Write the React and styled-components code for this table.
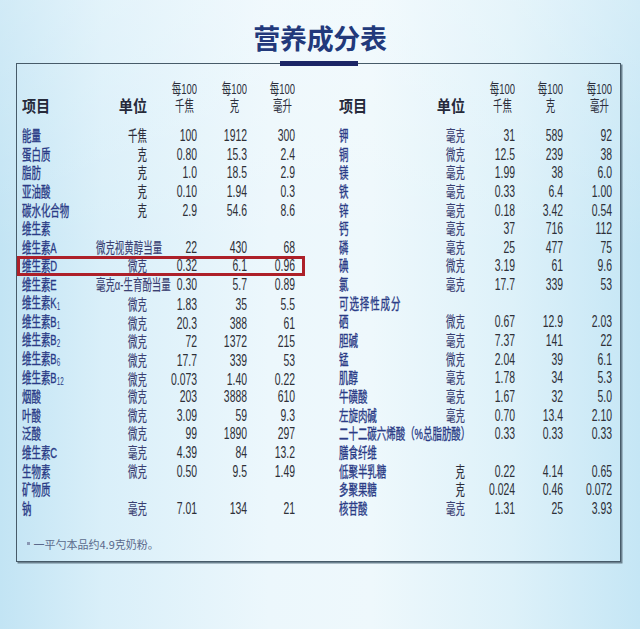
import React from "react";
import styled, { createGlobalStyle } from "styled-components";

const Global = createGlobalStyle`
  html, body { margin: 0; padding: 0; }
  body {
    width: 640px;
    height: 629px;
    overflow: hidden;
    font-family: "Liberation Sans", "Noto Sans CJK SC", sans-serif;
  }
`;

const Page = styled.div`
  width: 640px;
  height: 629px;
  box-sizing: border-box;
  padding-top: 22px;
  display: flex;
  flex-direction: column;
  background:
    linear-gradient(180deg, rgba(255,255,255,0.25) 0%, rgba(255,255,255,0) 40%),
    linear-gradient(90deg, #c2e4f4 0%, #d9eff9 16%, #ecf7fc 42%, #eef8fc 58%, #ddf1f9 80%, #c5e6f5 100%);
`;

const Title = styled.h1`
  margin: 0 0 9px;
  text-align: center;
  font-family: "Noto Sans CJK SC", sans-serif;
  font-size: 27px;
  line-height: 32px;
  font-weight: 700;
  color: #22397b;
  letter-spacing: -0.3px;
`;

const Panel = styled.div`
  position: relative;
  margin-left: 16px;
  width: 605px;
  height: 499px;
  box-sizing: border-box;
  border: 1.5px solid #475b69;
  box-shadow: 1.5px 1.5px 0 #6c8290;
  padding: 15.5px 6.5px 0 4.5px;
  display: flex;
  flex-direction: column;
`;

const Accent = styled.div`
  position: absolute;
  top: -3px;
  left: 50%;
  transform: translateX(-50%);
  width: 78px;
  height: 5px;
  background: #1b2566;
`;

const Tables = styled.div`
  display: flex;
  gap: 44px;
`;

const Table = styled.div`
  width: 273px;
  display: flex;
  flex-direction: column;
`;

const HeadRow = styled.div`
  display: grid;
  grid-template-columns: ${(p) => p.$cols};
  align-items: end;
  margin-bottom: 12.7px;
`;

const HeadLabel = styled.div`
  min-width: 0;
  white-space: nowrap;
  text-align: ${(p) => (p.$right ? "right" : "left")};
  transform: scaleX(0.88);
  transform-origin: ${(p) => (p.$right ? "right" : "left")} center;
  font-family: "Noto Sans CJK SC", sans-serif;
  font-size: 16px;
  line-height: 17px;
  font-weight: 700;
  color: #262a3a;
`;

const HeadCol = styled.div`
  min-width: 0;
  display: flex;
  justify-content: flex-end;
  transform: scaleX(0.63);
  transform-origin: right center;
`;

const HeadStack = styled.div`
  display: flex;
  flex-direction: column;
  align-items: center;
  white-space: nowrap;
  font-size: 15px;
  line-height: 17px;
  color: #2c2f3c;
`;

const Row = styled.div`
  position: relative;
  display: grid;
  grid-template-columns: ${(p) => p.$cols};
  align-items: center;
  height: 18.65px;
  &::after {
    content: "";
    display: ${(p) => (p.$hl ? "block" : "none")};
    position: absolute;
    left: -5px;
    right: -10px;
    top: -1px;
    bottom: -1px;
    border: 3px solid #ad2029;
    pointer-events: none;
  }
`;

const Name = styled.div`
  min-width: 0;
  white-space: nowrap;
  transform: scaleX(0.63);
  transform-origin: left center;
  font-size: 15px;
  line-height: 17px;
  font-weight: 400;
  -webkit-text-stroke: 0.35px currentColor;
  color: #2a3b86;
  letter-spacing: ${(p) => (p.$wide ? "1.5px" : "0")};
`;

const Sub = styled.span`
  font-size: 10px;
  vertical-align: -2px;
  -webkit-text-stroke: 0;
`;

const Unit = styled.div`
  min-width: 0;
  white-space: nowrap;
  text-align: right;
  transform: scaleX(0.63);
  transform-origin: right center;
  font-size: 15px;
  line-height: 17px;
  -webkit-text-stroke: 0.15px currentColor;
  color: ${(p) => (p.$dark ? "#2b2d3a" : "#3a3f72")};
`;

const Num = styled.div`
  min-width: 0;
  white-space: nowrap;
  text-align: right;
  transform: scaleX(0.65);
  transform-origin: right center;
  font-size: 16px;
  line-height: 17px;
  color: #2e3038;
`;

const Note = styled.div`
  margin: 19px 0 0 5px;
  display: flex;
  align-items: center;
  gap: 4px;
  font-family: "Noto Sans CJK SC", sans-serif;
  font-size: 11px;
  line-height: 14px;
  color: #5b6a8c;
`;

const NoteDot = styled.span`
  width: 3px;
  height: 3px;
  background: #8a98b4;
`;

const leftCols = "44px 81px 50px 50px 48px";
const rightCols = "44px 82px 50px 48px 49px";

const leftRows = [
  { n: "能量", u: "千焦", v: ["100", "1912", "300"] },
  { n: "蛋白质", u: "克", v: ["0.80", "15.3", "2.4"] },
  { n: "脂肪", u: "克", v: ["1.0", "18.5", "2.9"] },
  { n: "亚油酸", u: "克", v: ["0.10", "1.94", "0.3"] },
  { n: "碳水化合物", u: "克", v: ["2.9", "54.6", "8.6"] },
  { n: "维生素" },
  { n: "维生素A", u: "微克视黄醇当量", v: ["22", "430", "68"] },
  { n: "维生素D", u: "微克", v: ["0.32", "6.1", "0.96"], hl: true },
  { n: "维生素E", u: "毫克α-生育酚当量", v: ["0.30", "5.7", "0.89"] },
  { n: "维生素K", s: "1", u: "微克", v: ["1.83", "35", "5.5"] },
  { n: "维生素B", s: "1", u: "微克", v: ["20.3", "388", "61"] },
  { n: "维生素B", s: "2", u: "微克", v: ["72", "1372", "215"] },
  { n: "维生素B", s: "6", u: "微克", v: ["17.7", "339", "53"] },
  { n: "维生素B", s: "12", u: "微克", v: ["0.073", "1.40", "0.22"] },
  { n: "烟酸", u: "微克", v: ["203", "3888", "610"] },
  { n: "叶酸", u: "微克", v: ["3.09", "59", "9.3"] },
  { n: "泛酸", u: "微克", v: ["99", "1890", "297"] },
  { n: "维生素C", u: "毫克", v: ["4.39", "84", "13.2"] },
  { n: "生物素", u: "微克", v: ["0.50", "9.5", "1.49"] },
  { n: "矿物质" },
  { n: "钠", u: "毫克", v: ["7.01", "134", "21"] },
];

const rightRows = [
  { n: "钾", u: "毫克", v: ["31", "589", "92"] },
  { n: "铜", u: "微克", v: ["12.5", "239", "38"] },
  { n: "镁", u: "毫克", v: ["1.99", "38", "6.0"] },
  { n: "铁", u: "毫克", v: ["0.33", "6.4", "1.00"] },
  { n: "锌", u: "毫克", v: ["0.18", "3.42", "0.54"] },
  { n: "钙", u: "毫克", v: ["37", "716", "112"] },
  { n: "磷", u: "毫克", v: ["25", "477", "75"] },
  { n: "碘", u: "微克", v: ["3.19", "61", "9.6"] },
  { n: "氯", u: "毫克", v: ["17.7", "339", "53"] },
  { n: "可选择性成分", wide: true },
  { n: "硒", u: "微克", v: ["0.67", "12.9", "2.03"] },
  { n: "胆碱", u: "毫克", v: ["7.37", "141", "22"] },
  { n: "锰", u: "微克", v: ["2.04", "39", "6.1"] },
  { n: "肌醇", u: "毫克", v: ["1.78", "34", "5.3"] },
  { n: "牛磺酸", u: "毫克", v: ["1.67", "32", "5.0"] },
  { n: "左旋肉碱", u: "毫克", v: ["0.70", "13.4", "2.10"] },
  { n: "二十二碳六烯酸（%总脂肪酸）", u: "", v: ["0.33", "0.33", "0.33"] },
  { n: "膳食纤维" },
  { n: "低聚半乳糖", u: "克", v: ["0.22", "4.14", "0.65"] },
  { n: "多聚果糖", u: "克", v: ["0.024", "0.46", "0.072"] },
  { n: "核苷酸", u: "毫克", v: ["1.31", "25", "3.93"] },
];

function NutritionTable({ cols, rows }) {
  return (
    <Table>
      <HeadRow $cols={cols}>
        <HeadLabel>项目</HeadLabel>
        <HeadLabel $right>单位</HeadLabel>
        {["千焦", "克", "毫升"].map((b) => (
          <HeadCol key={b}>
            <HeadStack>
              <span>每100</span>
              <span>{b}</span>
            </HeadStack>
          </HeadCol>
        ))}
      </HeadRow>
      {rows.map((r, i) => (
        <Row key={i} $cols={cols} $hl={r.hl}>
          <Name $wide={r.wide}>
            {r.n}
            {r.s && <Sub>{r.s}</Sub>}
          </Name>
          <Unit $dark={r.u === "克" || r.u === "千焦"}>{r.u || ""}</Unit>
          {(r.v || ["", "", ""]).map((x, j) => (
            <Num key={j}>{x}</Num>
          ))}
        </Row>
      ))}
    </Table>
  );
}

export default function App() {
  return (
    <>
      <Global />
      <Page>
        <Title>营养成分表</Title>
        <Panel>
          <Accent />
          <Tables>
            <NutritionTable cols={leftCols} rows={leftRows} />
            <NutritionTable cols={rightCols} rows={rightRows} />
          </Tables>
          <Note>
            <NoteDot />
            <span>一平勺本品约4.9克奶粉。</span>
          </Note>
        </Panel>
      </Page>
    </>
  );
}
